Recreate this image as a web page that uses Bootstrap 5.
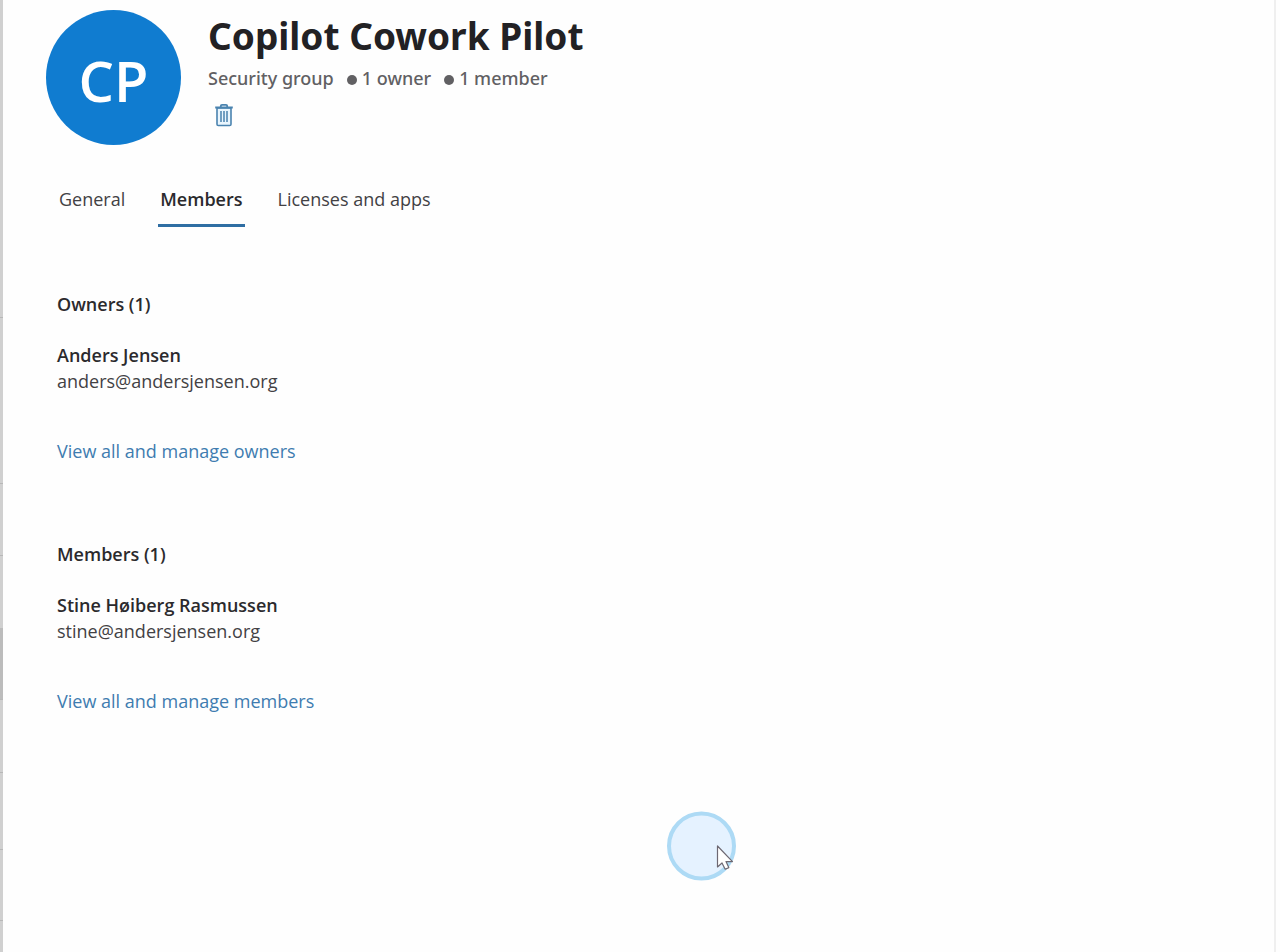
<!DOCTYPE html>
<html lang="en">
<head>
<meta charset="utf-8">
<meta name="viewport" content="width=device-width, initial-scale=1">
<title>Copilot Cowork Pilot</title>
<link href="https://cdn.jsdelivr.net/npm/bootstrap@5.3.0/dist/css/bootstrap.min.css" rel="stylesheet">
<style>
  body { font-family: "Open Sans", "Noto Sans", sans-serif; font-size: 18px; line-height: 26px; color: #424144; background: #fefefe; }
  /* edge of the dimmed list behind the panel */
  .list-edge { width: 3px; background: #d0d0d0; }
  .list-edge div { border-bottom: 1px solid #b8b8b8; }
  .edge-selected { background: #bcbcbc; }
  .group-panel { border-right: 2px solid #efefef; padding: 10px 44px 40px 43px; margin-right: 4px; }
  .avatar { width: 135px; height: 135px; background: #107cd0; font-size: 56px; font-weight: 600; padding-top: 4px; }
  .group-info { margin-left: 27px; font-family: "Noto Sans", sans-serif; }
  .group-name { font-size: 37px; line-height: 52px; font-weight: 700; color: #222124; }
  .group-meta { font-weight: 500; color: #616063; gap: 13px; margin-top: 3px; }
  .group-meta li + li::before { content: ""; display: inline-block; width: 10px; height: 10px; margin-right: 5px; border-radius: 50%; background: #616063; }
  .delete-btn { margin: 12px 0 0 6px; line-height: 0; }
  .group-tabs { gap: 31px; margin: 41px 0 0 11px; }
  .group-tabs .nav-link { padding: 0 2px 12px; color: #424144; border-bottom: 3px solid transparent; }
  .group-tabs .nav-link.active { font-weight: 600; color: #2b2a2d; border-color: #2f6ea3; }
  .people { margin: 64px 0 0 11px; }
  .people + .people { margin-top: 77px; }
  .people h2, .person { font-size: 18px; line-height: 26px; font-weight: 600; color: #2b2a2d; }
  .people h2 { margin-bottom: 26px; }
  .people .person { line-height: 25px; }
  .manage-link { color: #3f7cb0; margin-top: 44px; }
  .click-marker { left: 666px; top: 810px; pointer-events: none; }
</style>
</head>
<body>
<div class="d-flex min-vh-100 position-relative">
  <div class="list-edge d-flex flex-column flex-shrink-0" aria-hidden="true">
    <div style="height:318px"></div>
    <div style="height:166px"></div>
    <div style="height:72px"></div>
    <div style="height:72px" class="border-0"></div>
    <div style="height:72px" class="edge-selected"></div>
    <div style="height:73px"></div>
    <div style="height:77px"></div>
    <div style="height:71px"></div>
  </div>
  <main class="group-panel flex-grow-1">
    <header class="d-flex">
      <div class="avatar rounded-circle text-white d-flex align-items-center justify-content-center flex-shrink-0" aria-hidden="true">CP</div>
      <div class="group-info">
        <h1 class="group-name mb-0">Copilot Cowork Pilot</h1>
        <ul class="group-meta list-unstyled d-flex flex-wrap mb-0">
          <li>Security group</li>
          <li>1 owner</li>
          <li>1 member</li>
        </ul>
        <button type="button" class="delete-btn btn p-0 border-0" aria-label="Delete group">
          <svg width="20" height="24" viewBox="0 0 20 24" fill="none" stroke="#4a83af" stroke-width="1.6">
            <path d="M3 5h14v16.200q0 1.300-1.300 1.300H4.300q-1.300 0-1.300-1.300z" fill="#eaf6fe"/>
            <path d="M1.200 4.500h17.600M6.800 4V3q0-1.200 1.200-1.200h4q1.200 0 1.200 1.200v1" stroke-width="1.800"/>
            <path d="M7 8v11M10 8v11M13 8v11" stroke-width="1.500"/>
          </svg>
        </button>
      </div>
    </header>
    <nav class="group-tabs nav" aria-label="Group details">
      <a class="nav-link" href="#general">General</a>
      <a class="nav-link active" href="#members" aria-current="page">Members</a>
      <a class="nav-link" href="#licenses">Licenses and apps</a>
    </nav>
    <section class="people">
      <h2>Owners (1)</h2>
      <div class="person">Anders Jensen</div>
      <div>anders@andersjensen.org</div>
      <a class="manage-link d-inline-block text-decoration-none" href="#owners">View all and manage owners</a>
    </section>
    <section class="people">
      <h2>Members (1)</h2>
      <div class="person">Stine Høiberg Rasmussen</div>
      <div>stine@andersjensen.org</div>
      <a class="manage-link d-inline-block text-decoration-none" href="#all-members">View all and manage members</a>
    </section>
  </main>
  <svg class="click-marker position-absolute" width="72" height="72" viewBox="0 0 72 72" aria-hidden="true">
    <circle cx="35.500" cy="36" r="32.500" fill="#e5f2ff" stroke="#addaf5" stroke-width="4"/>
    <path d="M51.500 36v21l4.500-4 3.200 6.200 3.600-1.600-2.800-6h6.500z" fill="#fff" stroke="#6d6872" stroke-width="1.200" stroke-linejoin="round"/>
  </svg>
</div>
<script src="https://cdn.jsdelivr.net/npm/bootstrap@5.3.0/dist/js/bootstrap.bundle.min.js"></script>
</body>
</html>
